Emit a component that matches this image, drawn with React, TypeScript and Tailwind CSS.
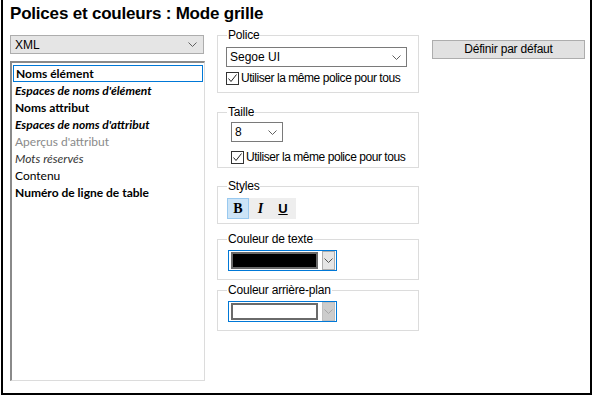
import React from "react";

const ui = "font-['Liberation_Sans',Arial,sans-serif]";
const segoe = "font-['Lato','Open_Sans',sans-serif]";

function Chevron({ color = "#606060" }: { color?: string }) {
  return (
    <svg width="9" height="5" viewBox="0 0 9 5" className="block">
      <polyline points="0.5,0.5 4.5,4.5 8.5,0.5" fill="none" stroke={color} strokeWidth="1" />
    </svg>
  );
}

function CheckRow({ label }: { label: string }) {
  return (
    <div className="flex items-center h-[13px]">
      <div className="w-[13px] h-[13px] border border-[#333] bg-white flex items-center justify-center">
        <svg width="11" height="11" viewBox="0 0 11 11">
          <polyline points="1.5,5.5 4,8.5 9.5,1.5" fill="none" stroke="#222" strokeWidth="1" />
        </svg>
      </div>
      <span className={`${ui} text-[12px] leading-[13px] text-black ml-[2px] tracking-[-0.45px]`}>{label}</span>
    </div>
  );
}

function Group({
  title,
  className,
  inner,
  children,
}: {
  title: string;
  className: string;
  inner: string;
  children: React.ReactNode;
}) {
  return (
    <fieldset className={`border border-[#dcdcdc] w-[202px] ${className}`}>
      <legend className={`${ui} text-[12px] leading-[14px] tracking-[-0.2px] text-black ml-[9px] px-[1px]`}>{title}</legend>
      <div className={inner}>{children}</div>
    </fieldset>
  );
}

function ColorCombo({ fill, disabled }: { fill: string; disabled?: boolean }) {
  return (
    <div className="w-[109px] h-[21px] border border-[#0078d7] bg-white flex items-center pl-[2px] pr-[1px]">
      <div className="w-[87px] h-[17px] border-2 border-[#6a6a6a]" style={{ backgroundColor: fill }} />
      <div
        className={`ml-auto w-[13px] h-[19px] border flex items-center justify-center ${
          disabled ? "bg-[#cccccc] border-[#bfbfbf]" : "bg-[#e5e5e5] border-[#adadad]"
        }`}
      >
        <Chevron color={disabled ? "#a8a8a8" : "#555"} />
      </div>
    </div>
  );
}

const items = [
  { text: "Noms élément", cls: "font-bold text-black" },
  { text: "Espaces de noms d'élément", cls: "font-bold italic text-black" },
  { text: "Noms attribut", cls: "font-bold text-black" },
  { text: "Espaces de noms d'attribut", cls: "font-bold italic text-black" },
  { text: "Aperçus d'attribut", cls: "text-[#8a8a8a]" },
  { text: "Mots réservés", cls: "italic text-[#333]" },
  { text: "Contenu", cls: "text-black" },
  { text: "Numéro de ligne de table", cls: "font-bold text-black" },
];

export default function App() {
  return (
    <div className="w-[594px] h-[397px] bg-white pl-[1px]">
      <div className="w-[591px] h-[395px] border-l-2 border-r-2 border-b-2 border-black">
        {/* Title */}
        <div className={`${ui} pt-[3px] pl-[7px] text-[17px] leading-[21px] tracking-[-0.2px] font-bold text-black`}>
          Polices et couleurs : Mode grille
        </div>

        <div className="flex mt-[4px] pl-[7px]">
          {/* Left column */}
          <div className="w-[195px] mt-[7px]">
            <div className="h-[19px] w-[194px] border border-[#adadad] bg-[#e5e5e5] flex items-center pl-[4px] pr-[6px]">
              <span className={`${ui} text-[12px] text-black`}>XML</span>
              <span className="ml-auto">
                <Chevron />
              </span>
            </div>
            <div className="mt-[7px] h-[320px] w-[195px] border-l-2 border-t-2 border-[#8a8a8a] border-r border-b border-r-[#dcdcdc] border-b-[#dcdcdc] bg-white pt-[2px] pl-[1px] pr-[1px]">
              {items.map((it, i) => (
                <div
                  key={it.text}
                  className={`h-[17px] flex items-center pl-[2px] ${
                    i === 0 ? "border border-[#0078d7] pl-[1px]" : ""
                  }`}
                >
                  <span className={`${segoe} text-[12px] leading-[15px] ${it.cls}`}>{it.text}</span>
                </div>
              ))}
            </div>
          </div>

          {/* Middle column */}
          <div className="ml-[12px] w-[202px]">
            <Group title="Police" className="" inner="pl-[8px] pb-[7px]">
              <div className="mt-[5px] w-[181px] h-[20px] border border-[#7a7a7a] bg-white flex items-center pl-[3px] pr-[5px]">
                <span className={`${ui} text-[12px] text-black`}>Segoe UI</span>
                <span className="ml-auto">
                  <Chevron />
                </span>
              </div>
              <div className="mt-[5px]">
                <CheckRow label="Utiliser la même police pour tous" />
              </div>
            </Group>

            <Group title="Taille" className="mt-[12px]" inner="pl-[13px] pb-[3px]">
              <div className="mt-[3px] w-[52px] h-[20px] border border-[#7a7a7a] bg-white flex items-center pl-[3px] pr-[5px]">
                <span className={`${ui} text-[12px] text-black`}>8</span>
                <span className="ml-auto">
                  <Chevron />
                </span>
              </div>
              <div className="mt-[9px]">
                <CheckRow label="Utiliser la même police pour tous" />
              </div>
            </Group>

            <Group title="Styles" className="mt-[11px]" inner="pl-[9px] pb-[4px]">
              <div className="mt-[5px] w-[69px] h-[21px] bg-[#eeeeee] flex items-center">
                <div className="w-[22px] h-[21px] bg-[#cce4f7] border border-[#99c9ef] flex items-center justify-center">
                  <span className="font-['Liberation_Serif',serif] font-bold text-[14px] leading-[14px] text-black">B</span>
                </div>
                <div className="w-[23px] flex items-center justify-center">
                  <span className="font-['Liberation_Serif',serif] font-bold italic text-[14px] leading-[14px] text-black">I</span>
                </div>
                <div className="w-[22px] flex items-center justify-center">
                  <span className={`${ui} font-bold underline text-[13px] leading-[14px] text-black`}>U</span>
                </div>
              </div>
            </Group>

            <Group title="Couleur de texte" className="mt-[8px]" inner="pl-[10px] pb-[8px]">
              <div className="mt-[4px]">
                <ColorCombo fill="#000000" />
              </div>
            </Group>

            <Group title="Couleur arrière-plan" className="mt-[3px]" inner="pl-[10px] pb-[8px]">
              <div className="mt-[4px]">
                <ColorCombo fill="#ffffff" disabled />
              </div>
            </Group>
          </div>

          {/* Right column */}
          <div className="ml-[13px] mt-[7px]">
            <button className={`${ui} w-[153px] h-[19px] border border-[#adadad] bg-[#e1e1e1] text-[12px] leading-[17px] tracking-[-0.2px] text-black`}>
              Définir par défaut
            </button>
          </div>
        </div>
      </div>
    </div>
  );
}
